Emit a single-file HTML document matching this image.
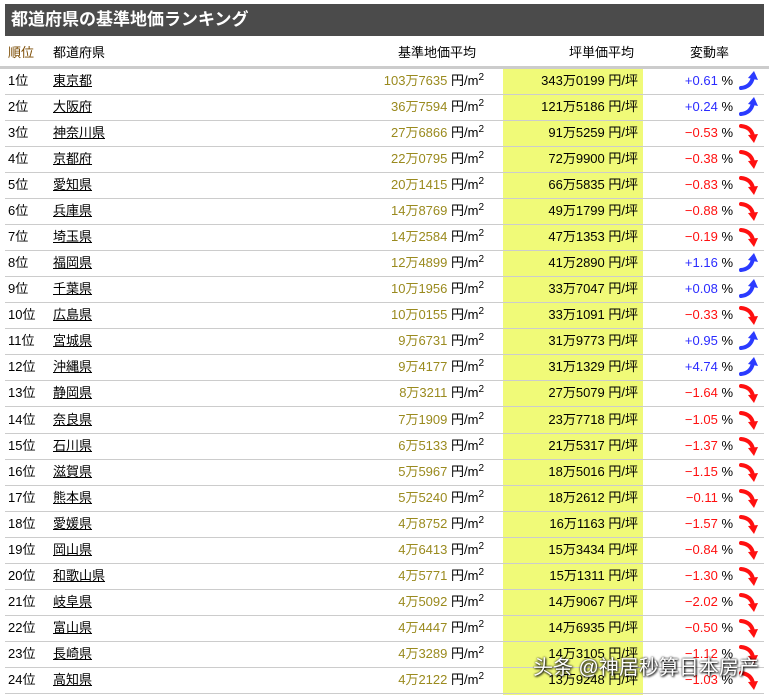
<!DOCTYPE html>
<html><head><meta charset="utf-8"><style>
body{margin:0;width:769px;height:695px;background:#fff;font-family:"Liberation Sans","Noto Sans CJK JP",sans-serif;font-size:13px;color:#000;position:relative;overflow:hidden}
.hd{position:absolute;left:5px;top:4px;width:759px;height:32px;background:#4b4b4b;color:#fff;font-weight:bold;font-size:17px;line-height:32px;padding-left:6px;box-sizing:border-box}
.yl{position:absolute;left:503px;top:68px;width:140px;height:627px;background:#f0fa78}
.th{position:absolute;top:40px;height:26px;line-height:26px;width:769px;border-bottom:3px solid #ccc}
.r{position:absolute;left:5px;width:759px;height:26px;line-height:26px;border-bottom:1px solid #ccc}
.c{position:absolute;top:0;white-space:nowrap}
.rk{left:3px}.pf{left:48px;text-decoration:underline}
.lp{right:280px;text-align:right}.tp{right:126px}.ch{right:31px}
.o{color:#9a8a1e}.b{color:#2b2bff}.d{color:#ff1010}
.ar{position:absolute;right:5px;top:3px;width:20px;height:20px}
.wm{position:absolute;left:533px;top:651px;color:#fff;font-size:20px;text-shadow:0 0 2px #000,1px 1px 2px #000;font-family:"Liberation Sans","Noto Sans CJK SC",sans-serif;white-space:nowrap}
</style></head><body>
<div class="hd">都道府県の基準地価ランキング</div>
<div class="yl"></div>
<div class="th"><span class="c" style="left:8px;color:#7a4a00">順位</span><span class="c" style="left:53px">都道府県</span><span class="c" style="left:398px">基準地価平均</span><span class="c" style="left:569px">坪単価平均</span><span class="c" style="left:690px">変動率</span></div>
<svg width="0" height="0" style="position:absolute"><defs>
<g id="up"><path d="M2 17 Q12 16 14 6" stroke="#2b3bff" stroke-width="4" fill="none" stroke-linecap="round"/><path d="M9 7 L15 0 L19 9 Z" fill="#2b3bff"/></g>
<g id="dn"><path d="M2 3 Q12 4 14 13" stroke="#ff1010" stroke-width="4" fill="none" stroke-linecap="round"/><path d="M9 12 L15 20 L19 11 Z" fill="#ff1010"/></g>
</defs></svg>
<div id="rows"></div>
<script>
var d=[["東京都","103万7635","343万0199","+0.61"],["大阪府","36万7594","121万5186","+0.24"],["神奈川県","27万6866","91万5259","−0.53"],["京都府","22万0795","72万9900","−0.38"],["愛知県","20万1415","66万5835","−0.83"],["兵庫県","14万8769","49万1799","−0.88"],["埼玉県","14万2584","47万1353","−0.19"],["福岡県","12万4899","41万2890","+1.16"],["千葉県","10万1956","33万7047","+0.08"],["広島県","10万0155","33万1091","−0.33"],["宮城県","9万6731","31万9773","+0.95"],["沖縄県","9万4177","31万1329","+4.74"],["静岡県","8万3211","27万5079","−1.64"],["奈良県","7万1909","23万7718","−1.05"],["石川県","6万5133","21万5317","−1.37"],["滋賀県","5万5967","18万5016","−1.15"],["熊本県","5万5240","18万2612","−0.11"],["愛媛県","4万8752","16万1163","−1.57"],["岡山県","4万6413","15万3434","−0.84"],["和歌山県","4万5771","15万1311","−1.30"],["岐阜県","4万5092","14万9067","−2.02"],["富山県","4万4447","14万6935","−0.50"],["長崎県","4万3289","14万3105","−1.12"],["高知県","4万2122","13万9248","−1.03"]];
var h="";d.forEach(function(x,i){var up=x[3][0]=="+";h+='<div class="r" style="top:'+(68+i*26.04)+'px"><span class="c rk">'+(i+1)+'位</span><span class="c pf">'+x[0]+'</span><span class="c lp"><span class="o">'+x[1]+'</span> 円/m<sup style="font-size:10px;vertical-align:5px;line-height:0">2</sup></span><span class="c tp">'+x[2]+' 円/坪</span><span class="c ch"><span class="'+(up?'b':'d')+'">'+x[3]+'</span> %</span><svg class="ar" viewBox="0 0 20 20"><use href="#'+(up?'up':'dn')+'"/></svg></div>'});
document.getElementById("rows").innerHTML=h;
</script>
<div class="wm">头条 @神居秒算日本房产</div>
</body></html>
